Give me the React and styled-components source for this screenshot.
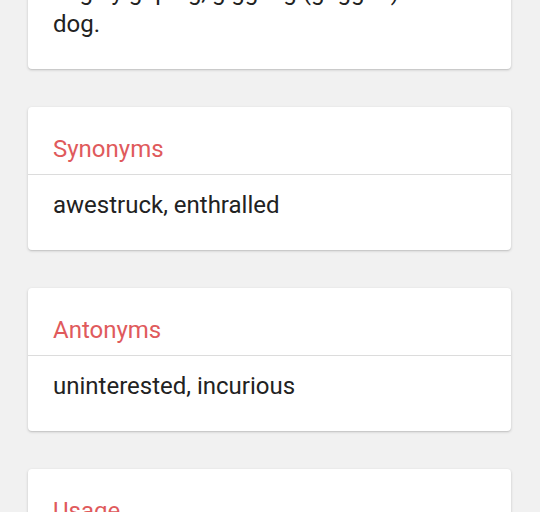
import styled, { createGlobalStyle } from "styled-components";

const GlobalStyle = createGlobalStyle`
  html, body {
    margin: 0;
    padding: 0;
    background: #f1f1f1;
    overflow: hidden;
  }
  body {
    font-family: Roboto, "Noto Sans", sans-serif;
  }
`;

const sections = [
  {
    title: "Example",
    body: "The crowd was agog, staring in wonder,\nhugely gaping, giggling (gagged) at a\ndog.",
  },
  { title: "Synonyms", body: "awestruck, enthralled" },
  { title: "Antonyms", body: "uninterested, incurious" },
  { title: "Usage", body: "They were agog at the news." },
];

const App = () => {
  return (
    <>
      <GlobalStyle />
      <Page>
        {sections.map((s) => (
          <Card key={s.title}>
            <Heading>{s.title}</Heading>
            <Body>{s.body}</Body>
          </Card>
        ))}
      </Page>
    </>
  );
};

const Page = styled.div`
  display: flex;
  flex-direction: column;
  gap: 38px;
  padding: 0 29px 40px 28px;
  margin-top: -138px;
`;

const Card = styled.div`
  background: #fff;
  border-radius: 4px;
  box-shadow: 0 1px 3px rgba(0, 0, 0, 0.18), 0 1px 1px rgba(0, 0, 0, 0.06);
`;

const Heading = styled.div`
  padding: 26px 25px 9px;
  font-size: 24px;
  line-height: 32px;
  color: #e05a5c;
  border-bottom: 1px solid #dcdcdc;
`;

const Body = styled.div`
  padding: 14px 25px 29px;
  font-size: 24px;
  line-height: 32px;
  color: #222;
  white-space: pre-line;
`;

export default App;
